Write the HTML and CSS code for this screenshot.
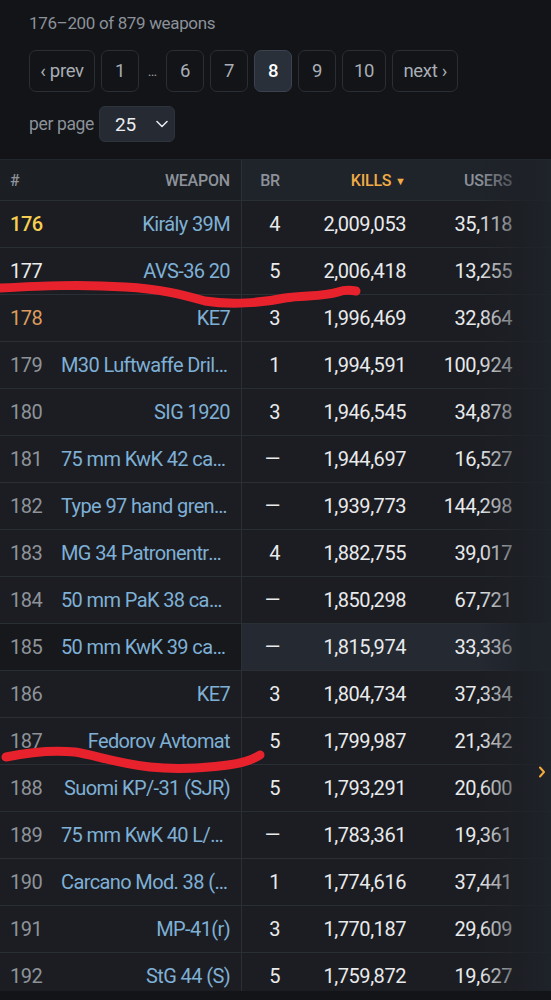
FILE: index.html
```html
<!DOCTYPE html>
<html lang="en">
<head>
<meta charset="utf-8">
<title>Weapons</title>
<link rel="stylesheet" href="styles.css">
</head>
<body>
<div class="top">
  <p class="summary">176–200 of 879 weapons</p>
  <nav class="pager">
    <a class="pg wide">‹ prev</a>
    <a class="pg">1</a>
    <span class="dots">…</span>
    <a class="pg">6</a>
    <a class="pg">7</a>
    <a class="pg active">8</a>
    <a class="pg">9</a>
    <a class="pg">10</a>
    <a class="pg wide">next ›</a>
  </nav>
  <div class="perpage">
    <span>per page</span>
    <div class="select"><span>25</span><svg width="12" height="8" viewBox="0 0 12 8"><polyline points="1,1.5 6,6.5 11,1.5" fill="none" stroke="#e4e7eb" stroke-width="1.6" stroke-linecap="round" stroke-linejoin="round"/></svg></div>
  </div>
</div>

<div class="table-wrap">
  <table class="weapons">
    <colgroup>
      <col class="c-rank"><col class="c-name"><col class="c-br"><col class="c-kills"><col class="c-users">
    </colgroup>
    <thead>
      <tr>
        <th class="rank">#</th>
        <th class="name">Weapon</th>
        <th class="num br">BR</th>
        <th class="num kills sorted">Kills <span class="arrow">▼</span></th>
        <th class="num users">Users</th>
      </tr>
    </thead>
    <tbody>
      <tr><td class="rank gold">176</td><td class="name">Király 39M</td><td class="num br">4</td><td class="num">2,009,053</td><td class="num users">35,118</td></tr>
      <tr><td class="rank silver">177</td><td class="name">AVS-36 20</td><td class="num br">5</td><td class="num">2,006,418</td><td class="num users">13,255</td></tr>
      <tr><td class="rank bronze">178</td><td class="name">KE7</td><td class="num br">3</td><td class="num">1,996,469</td><td class="num users">32,864</td></tr>
      <tr><td class="rank">179</td><td class="name">M30 Luftwaffe Drilling</td><td class="num br">1</td><td class="num">1,994,591</td><td class="num users">100,924</td></tr>
      <tr><td class="rank">180</td><td class="name">SIG 1920</td><td class="num br">3</td><td class="num">1,946,545</td><td class="num users">34,878</td></tr>
      <tr><td class="rank">181</td><td class="name">75 mm KwK 42 cannon</td><td class="num br">—</td><td class="num">1,944,697</td><td class="num users">16,527</td></tr>
      <tr><td class="rank">182</td><td class="name">Type 97 hand grenade</td><td class="num br">—</td><td class="num">1,939,773</td><td class="num users">144,298</td></tr>
      <tr><td class="rank">183</td><td class="name">MG 34 Patronentrommel</td><td class="num br">4</td><td class="num">1,882,755</td><td class="num users">39,017</td></tr>
      <tr><td class="rank">184</td><td class="name">50 mm PaK 38 cannon</td><td class="num br">—</td><td class="num">1,850,298</td><td class="num users">67,721</td></tr>
      <tr class="hover"><td class="rank">185</td><td class="name">50 mm KwK 39 cannon</td><td class="num br">—</td><td class="num">1,815,974</td><td class="num users">33,336</td></tr>
      <tr><td class="rank">186</td><td class="name">KE7</td><td class="num br">3</td><td class="num">1,804,734</td><td class="num users">37,334</td></tr>
      <tr><td class="rank">187</td><td class="name">Fedorov Avtomat</td><td class="num br">5</td><td class="num">1,799,987</td><td class="num users">21,342</td></tr>
      <tr><td class="rank">188</td><td class="name">Suomi KP/-31 (SJR)</td><td class="num br">5</td><td class="num">1,793,291</td><td class="num users">20,600</td></tr>
      <tr><td class="rank">189</td><td class="name">75 mm KwK 40 L/43 cannon</td><td class="num br">—</td><td class="num">1,783,361</td><td class="num users">19,361</td></tr>
      <tr><td class="rank">190</td><td class="name">Carcano Mod. 38 (special)</td><td class="num br">1</td><td class="num">1,774,616</td><td class="num users">37,441</td></tr>
      <tr><td class="rank">191</td><td class="name">MP-41(r)</td><td class="num br">3</td><td class="num">1,770,187</td><td class="num users">29,609</td></tr>
      <tr><td class="rank">192</td><td class="name">StG 44 (S)</td><td class="num br">5</td><td class="num">1,759,872</td><td class="num users">19,627</td></tr>
      <tr><td class="rank">193</td><td class="name">Bofors 40 mm</td><td class="num br">2</td><td class="num">1,751,220</td><td class="num users">25,108</td></tr>
    </tbody>
  </table>
  <div class="fade"></div>
  <svg class="scroll-hint" width="8" height="12" viewBox="0 0 8 12"><polyline points="2,1.5 6,6 2,10.5" fill="none" stroke="#f0ab3c" stroke-width="2" stroke-linecap="round" stroke-linejoin="round"/></svg>
</div>

<svg class="marks" width="551" height="1000" viewBox="0 0 551 1000">
  <path d="M0,288 C40,286 80,284 125,287 C160,289 180,294 205,301 C230,305 262,303 285,298 C305,295 322,297 338,292 C344,290 350,290 356,291" />
  <path d="M6,757 C30,752 55,750 75,752 C95,755 115,763 150,767 C180,770 205,768 228,765 C244,763 252,760 260,755" />
</svg>
</body>
</html>
```
FILE: styles.css
```css
* { box-sizing: border-box; }

html, body { margin: 0; }

body {
  width: 551px;
  height: 1000px;
  overflow: hidden;
  position: relative;
  background: #121418;
  font-family: Roboto, "Noto Sans", "Liberation Sans", sans-serif;
  color: #e9eaec;
}

.top { padding: 13px 0 0 29px; }

.summary {
  margin: 0;
  font-size: 17px;
  line-height: 20px;
  letter-spacing: -0.35px;
  color: #8c9199;
}

.pager {
  display: flex;
  align-items: center;
  gap: 6px;
  margin-top: 17px;
}

.pg {
  height: 42px;
  min-width: 38px;
  padding: 0 11px;
  border: 1px solid #2a2e35;
  border-radius: 7px;
  display: flex;
  align-items: center;
  justify-content: center;
  font-size: 18.5px;
  letter-spacing: -0.3px;
  color: #a9aeb5;
}

.pg.wide { width: 66px; padding: 0; }

.pg.active {
  background: #29303a;
  border-color: #3b434e;
  color: #ffffff;
  font-weight: 500;
}

.dots {
  width: 15px;
  text-align: center;
  font-size: 14px;
  color: #9a9fa6;
}

.perpage {
  display: flex;
  align-items: center;
  gap: 5px;
  margin-top: 14px;
  font-size: 17.5px;
  letter-spacing: -0.35px;
  color: #8c9199;
}

.select {
  width: 76px;
  height: 36px;
  background: #252a33;
  border: 1px solid #2e343e;
  border-radius: 6px;
  display: flex;
  align-items: center;
  justify-content: space-between;
  padding: 0 6px 0 15px;
  font-size: 19px;
  letter-spacing: -0.3px;
  color: #eceef1;
}

.table-wrap {
  position: relative;
  margin-top: 17px;
  height: 832px;
  overflow: hidden;
  border-top: 1px solid #23272e;
}

.weapons {
  width: 551px;
  table-layout: fixed;
  border-collapse: separate;
  border-spacing: 0;
}

.c-rank { width: 51px; }
.c-name { width: 191px; }
.c-br { width: 50px; }
.c-kills { width: 126px; }
.c-users { width: 133px; }

th, td {
  height: 47px;
  padding: 0;
  border-bottom: 1px solid #2a2e35;
  white-space: nowrap;
  overflow: hidden;
  background: #1b1d22;
}

th {
  height: 41px;
  font-size: 16px;
  font-weight: 500;
  letter-spacing: -0.2px;
  text-transform: uppercase;
  color: #8d929a;
  background: #1f232a;
  text-align: left;
}

th.rank, th.name { background: #1b1e23; }

td {
  font-size: 20px;
  letter-spacing: -0.45px;
}

.rank {
  padding-left: 10px;
  color: #8e939a;
}

.rank.gold { color: #f6cf52; font-weight: 500; }
.rank.silver { color: #ececec; }
.rank.bronze { color: #dd9c5e; }

.name {
  text-align: right;
  padding: 0 11px 0 10px;
  text-overflow: ellipsis;
  border-right: 1px solid #2b2f37;
  color: #7fb0d6;
}

td.name { letter-spacing: -0.62px; }

th.name { color: #8d929a; }

.num { text-align: right; }

td.num, th.num { padding-right: 12px; }

td.users, th.users { padding-right: 39px; }

.sorted { color: #f0ab46; }
.arrow { font-size: 11px; letter-spacing: 0; vertical-align: 1px; }

tr.hover td { background: #242932; }
tr.hover td.rank, tr.hover td.name { background: #16181c; }

.fade {
  position: absolute;
  top: 0;
  right: 0;
  width: 72px;
  height: 100%;
  background: linear-gradient(to right, rgba(29, 32, 38, 0) 0%, rgba(29, 32, 38, 0.75) 60%, rgba(31, 35, 42, 0.92) 100%);
  pointer-events: none;
}

.scroll-hint {
  position: absolute;
  left: 538px;
  top: 606px;
}

.marks {
  position: absolute;
  left: 0;
  top: 0;
  pointer-events: none;
}

.marks path {
  fill: none;
  stroke: #e8222d;
  stroke-width: 9;
  stroke-linecap: round;
  stroke-linejoin: round;
}
```
